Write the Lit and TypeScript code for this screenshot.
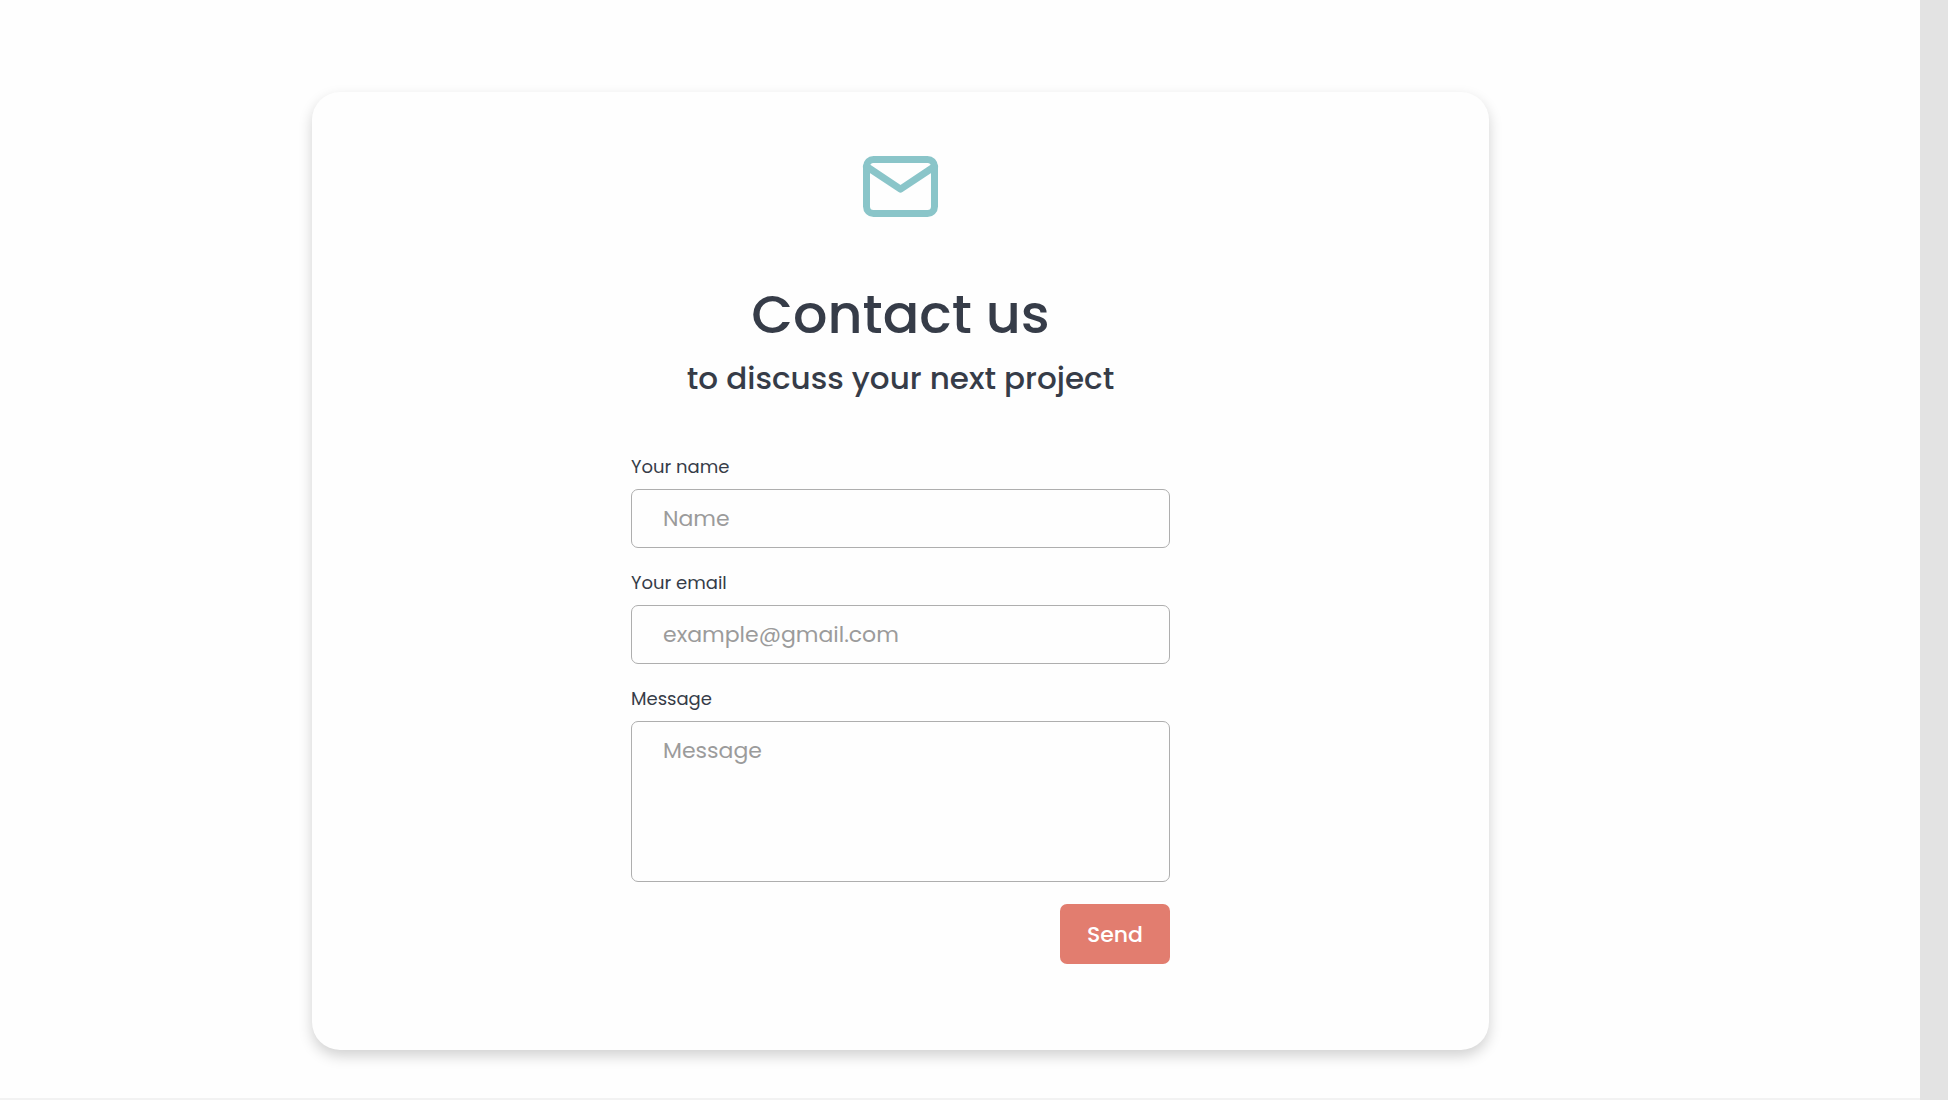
import { LitElement, html, css } from "lit";
import { customElement } from "lit/decorators.js";

@customElement("contact-form")
export class ContactForm extends LitElement {
  static styles = css`
    :host {
      display: block;
      width: 100%;
      max-width: 539px;
    }
    .form {
      display: flex;
      flex-direction: column;
      gap: 22px;
    }
    .field {
      display: flex;
      flex-direction: column;
      gap: 9px;
    }
    .label {
      font-size: 18px;
      line-height: 26px;
    }
    .control {
      box-sizing: border-box;
      width: 100%;
      height: 59px;
      margin: 0;
      padding: 12px 31px;
      border: 1px solid #aeaeae;
      border-radius: 7px;
      background: transparent;
      color: inherit;
      font: inherit;
      font-size: 22px;
      line-height: 33px;
      outline: none;
    }
    .control::placeholder {
      color: #9b9b9b;
      opacity: 1;
    }
    .control:focus {
      border-color: #8ac5c9;
    }
    .message {
      display: block;
      height: 161px;
      resize: none;
    }
    .send {
      align-self: flex-end;
      height: 60px;
      padding: 0 27px;
      border: 0;
      border-radius: 7px;
      background: #e27d6f;
      color: #fff;
      font: inherit;
      font-size: 22px;
      font-weight: 500;
      cursor: pointer;
    }
  `;

  private onSubmit(event: Event) {
    event.preventDefault();
  }

  render() {
    return html`
      <form class="form" @submit=${this.onSubmit}>
        <div class="field">
          <label class="label" for="name">Your name</label>
          <input class="control" id="name" name="name" type="text" placeholder="Name" />
        </div>
        <div class="field">
          <label class="label" for="email">Your email</label>
          <input class="control" id="email" name="email" type="email" placeholder="example@gmail.com" />
        </div>
        <div class="field">
          <label class="label" for="message">Message</label>
          <textarea class="control message" id="message" name="message" placeholder="Message"></textarea>
        </div>
        <button class="send" type="submit">Send</button>
      </form>
    `;
  }
}

@customElement("app-root")
export class AppRoot extends LitElement {
  static styles = css`
    :host {
      display: flex;
      min-height: 100vh;
      background: #fefefe;
      color: #363c48;
      font-family: Poppins, Inter, "Open Sans", sans-serif;
    }
    .page {
      flex: 1;
      box-sizing: border-box;
      padding: 92px 119px 48px 0;
      border-bottom: 2px solid #f2f2f2;
    }
    .gutter {
      width: 28px;
      background: #e3e3e3;
    }
    .card {
      box-sizing: border-box;
      display: flex;
      flex-direction: column;
      align-items: center;
      max-width: 1177px;
      margin: 0 auto;
      padding: 48px 24px 86px;
      border-radius: 28px;
      background: #fefefe;
      box-shadow: 0 6px 14px rgba(0, 0, 0, 0.18);
    }
    .icon {
      display: block;
      width: 91px;
      height: 90px;
      color: #8ac5c9;
    }
    .title {
      margin: 48px 0 0;
      font-size: 54px;
      line-height: 72px;
      font-weight: 500;
      text-align: center;
    }
    .subtitle {
      margin: 4px 0 52px;
      font-size: 31px;
      line-height: 48px;
      font-weight: 500;
      text-align: center;
    }
  `;

  render() {
    return html`
      <main class="page">
        <section class="card">
          <svg class="icon" viewBox="0 0 91 90" fill="none" stroke="currentColor" stroke-width="7"
            stroke-linecap="round" stroke-linejoin="round" aria-hidden="true">
            <rect x="11.5" y="19.5" width="68" height="54" rx="7" />
            <path d="M11.5 26.5 45.5 49.2 79.5 26.5" />
          </svg>
          <h1 class="title">Contact us</h1>
          <p class="subtitle">to discuss your next project</p>
          <contact-form></contact-form>
        </section>
      </main>
      <div class="gutter"></div>
    `;
  }
}
